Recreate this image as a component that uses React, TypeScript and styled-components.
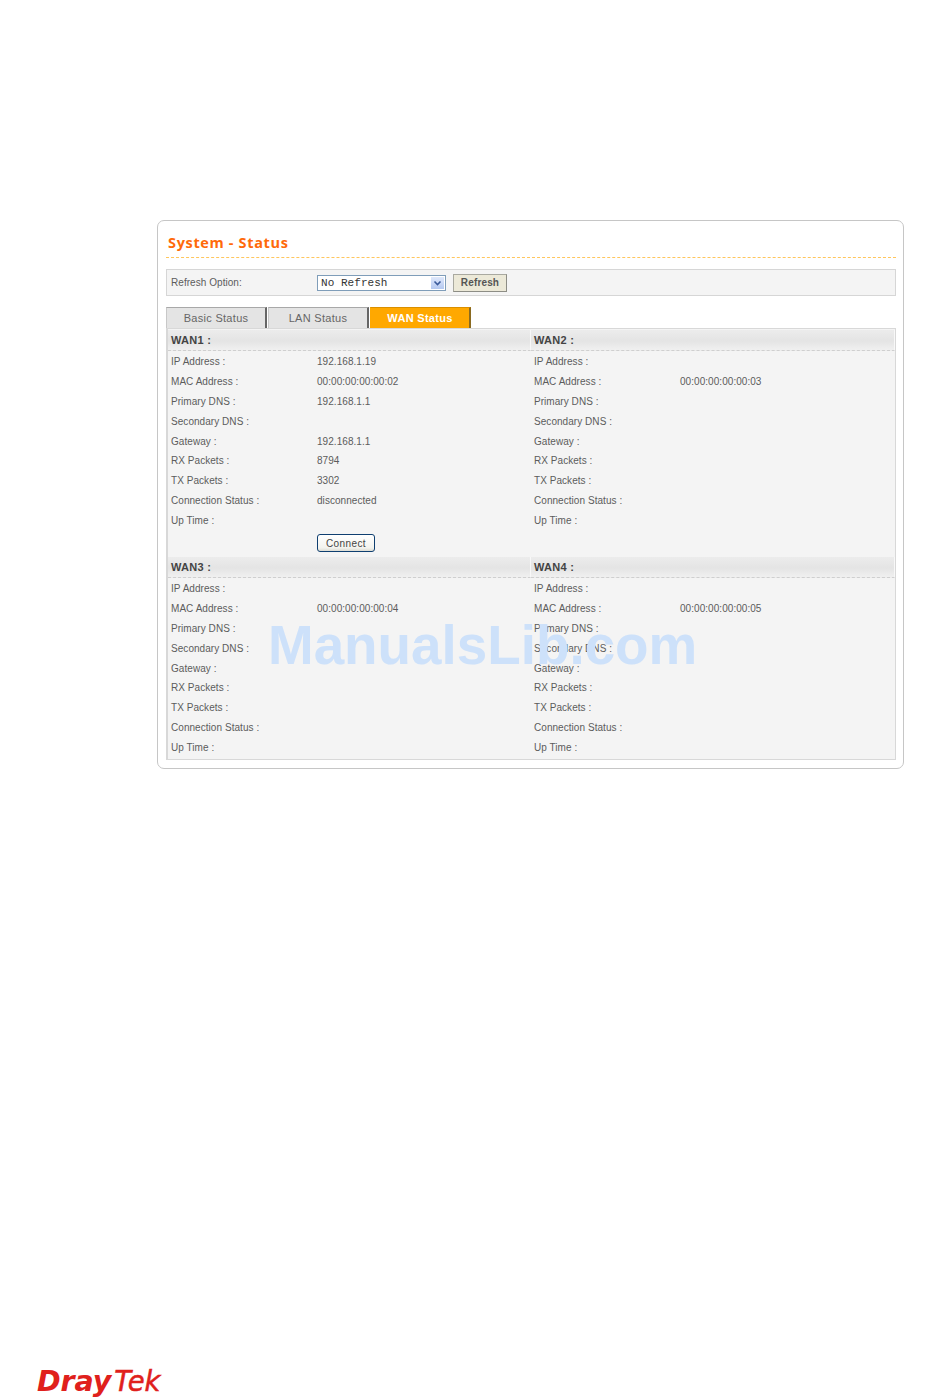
import styled, { createGlobalStyle, css } from "styled-components";

const GlobalStyle = createGlobalStyle`
  html, body {
    margin: 0;
    padding: 0;
    background: #fff;
  }
  body {
    font-family: "Liberation Sans", Arial, sans-serif;
  }
`;

type WanData = {
  name: string;
  ip?: string;
  mac: string;
  dns?: string;
  gateway?: string;
  rx?: string;
  tx?: string;
  status?: string;
  connect?: boolean;
};

const wans: WanData[] = [
  {
    name: "WAN1",
    ip: "192.168.1.19",
    mac: "00:00:00:00:00:02",
    dns: "192.168.1.1",
    gateway: "192.168.1.1",
    rx: "8794",
    tx: "3302",
    status: "disconnected",
    connect: true,
  },
  { name: "WAN2", mac: "00:00:00:00:00:03" },
  { name: "WAN3", mac: "00:00:00:00:00:04" },
  { name: "WAN4", mac: "00:00:00:00:00:05" },
];

const PageWrap = styled.div`
  position: relative;
  width: 950px;
  height: 1398px;
  overflow: hidden;
  display: flex;
  flex-direction: column;
  padding: 220px 46px 0 157px;
  box-sizing: border-box;
`;

const Card = styled.div`
  width: 747px;
  height: 549px;
  box-sizing: border-box;
  border: 1px solid #c6c6c6;
  border-radius: 7px;
  padding: 0 7px 0 8px;
  background: #fff;
`;

const Title = styled.h1`
  margin: 0;
  height: 37px;
  padding: 13px 0 0 2px;
  box-sizing: border-box;
  border-bottom: 1px dashed #ffc65c;
  font-family: "Open Sans", sans-serif;
  font-size: 14.5px;
  line-height: 18px;
  font-weight: 700;
  letter-spacing: 0.65px;
  color: #ff6a0a;
`;

const RefreshBar = styled.div`
  margin-top: 11px;
  height: 27px;
  box-sizing: border-box;
  border: 1px solid #d6d6d6;
  background: #f4f4f4;
  display: flex;
  align-items: center;
  padding-left: 4px;
`;

const textStyle = css`
  font-size: 10px;
  letter-spacing: 0.05px;
  color: #5c5c5c;
`;

const RefreshLabel = styled.span`
  ${textStyle}
  width: 146px;
  flex: none;
`;

const FakeSelect = styled.div`
  width: 129px;
  height: 16px;
  box-sizing: border-box;
  border: 1px solid #7f9db9;
  background: #fff;
  display: flex;
  align-items: center;
  justify-content: space-between;
  padding: 0 1px 0 3px;
  margin-top: 1px;
  font-family: "Liberation Mono", monospace;
  font-size: 11px;
  letter-spacing: 0.05px;
  color: #333;
`;

const SelectArrow = styled.span`
  width: 13px;
  height: 12px;
  background: linear-gradient(#dfe8fb, #b4c8f0);
  display: flex;
  align-items: center;
  justify-content: center;
`;

const RefreshButton = styled.button`
  margin-left: 7px;
  width: 54px;
  height: 18px;
  padding: 0;
  box-sizing: border-box;
  border: 1px solid #a9a9a0;
  border-right-color: #8d8d85;
  border-bottom-color: #8d8d85;
  background: #ece9d8;
  font-family: "Liberation Sans", sans-serif;
  font-size: 10px;
  font-weight: 700;
  color: #555;
  letter-spacing: 0.15px;
`;

const TabRow = styled.div`
  margin-top: 11px;
  height: 21px;
  display: flex;
  gap: 1px;
`;

const Tab = styled.div<{ $active?: boolean }>`
  width: 101px;
  box-sizing: border-box;
  display: flex;
  align-items: center;
  justify-content: center;
  font-size: 11px;
  letter-spacing: 0.3px;
  border-top: 1px solid ${(p) => (p.$active ? "#d98f00" : "#a8a8a8")};
  border-left: 1px solid ${(p) => (p.$active ? "#ffa800" : "#c8c8c8")};
  border-right: 2px solid ${(p) => (p.$active ? "#8a6a20" : "#666")};
  background: ${(p) => (p.$active ? "#ffa800" : "#e4e4e4")};
  color: ${(p) => (p.$active ? "#fff" : "#666")};
  font-weight: ${(p) => (p.$active ? 700 : 400)};
`;

const Panel = styled.div`
  box-sizing: border-box;
  height: 432px;
  border: 1px solid #d8d8d8;
  border-left-width: 2px;
  background: #f4f4f4;
  padding: 1px 0 0 0;
  display: grid;
  grid-template-columns: 363px 364px;
  grid-template-rows: 227px 1fr;
`;

const WanBlock = styled.section`
  min-width: 0;
`;

const WanHeader = styled.h2`
  margin: 0 0 0.5px;
  height: 21px;
  box-sizing: border-box;
  padding-left: 3px;
  border-bottom: 1px dashed #cfcfcf;
  border-right: 1px solid #f8f8f8;
  background: linear-gradient(#ececec, #e4e4e4 55%, #f0f0f0);
  font-size: 11px;
  line-height: 20px;
  font-weight: 700;
  letter-spacing: 0.3px;
  color: #444;
`;

const WanRow = styled.div`
  height: 19.9px;
  display: flex;
  align-items: center;
  padding-left: 3px;
  ${textStyle}
`;

const WanLabel = styled.span`
  width: 146px;
  flex: none;
`;

const ConnectRow = styled.div`
  padding: 3.5px 0 0 149px;
`;

const ConnectButton = styled.button`
  display: block;
  width: 58px;
  height: 18px;
  padding: 0;
  box-sizing: border-box;
  border: 1px solid #0f3f70;
  border-radius: 3px;
  background: linear-gradient(#fff, #f3f3ee 80%, #dcdcd4);
  font-family: "Liberation Sans", sans-serif;
  font-size: 10px;
  letter-spacing: 0.4px;
  color: #444;
`;

const Watermark = styled.div`
  position: absolute;
  left: 268px;
  top: 612px;
  font-size: 54.8px;
  line-height: 66px;
  font-weight: 700;
  color: #cde1fa;
  white-space: nowrap;
`;

const LogoFooter = styled.div`
  position: absolute;
  left: 37px;
  top: 1366px;
  height: 30px;
  display: flex;
  align-items: baseline;
  white-space: nowrap;
  color: #e0201c;
  font-family: "DejaVu Sans", sans-serif;
  font-style: italic;
  line-height: 30px;
`;

const LogoDray = styled.span`
  font-weight: 700;
  font-size: 28.5px;
  letter-spacing: -0.1px;
`;

const LogoTek = styled.span`
  font-size: 27.5px;
  margin-left: 3px;
  -webkit-text-stroke: 0.5px #e0201c;
`;

const WanSection = ({ wan }: { wan: WanData }) => {
  const rows: [string, string | undefined][] = [
    ["IP Address :", wan.ip],
    ["MAC Address :", wan.mac],
    ["Primary DNS :", wan.dns],
    ["Secondary DNS :", undefined],
    ["Gateway :", wan.gateway],
    ["RX Packets :", wan.rx],
    ["TX Packets :", wan.tx],
    ["Connection Status :", wan.status],
    ["Up Time :", undefined],
  ];
  return (
    <WanBlock>
      <WanHeader>{wan.name} :</WanHeader>
      {rows.map(([label, value]) => (
        <WanRow key={label}>
          <WanLabel>{label}</WanLabel>
          {value}
        </WanRow>
      ))}
      {wan.connect && (
        <ConnectRow>
          <ConnectButton>Connect</ConnectButton>
        </ConnectRow>
      )}
    </WanBlock>
  );
};

const App = () => {
  return (
    <PageWrap>
      <GlobalStyle />
      <Card>
        <Title>System - Status</Title>
        <RefreshBar>
          <RefreshLabel>Refresh Option:</RefreshLabel>
          <FakeSelect>
            No Refresh
            <SelectArrow>
              <svg width="9" height="7" viewBox="0 0 9 7">
                <path d="M1.5 1.5 L4.5 4.5 L7.5 1.5" fill="none" stroke="#3a5a9a" strokeWidth="1.6" />
              </svg>
            </SelectArrow>
          </FakeSelect>
          <RefreshButton>Refresh</RefreshButton>
        </RefreshBar>
        <TabRow>
          <Tab>Basic Status</Tab>
          <Tab>LAN Status</Tab>
          <Tab $active>WAN Status</Tab>
        </TabRow>
        <Panel>
          {wans.map((wan) => (
            <WanSection key={wan.name} wan={wan} />
          ))}
        </Panel>
      </Card>
      <Watermark>ManualsLib.com</Watermark>
      <LogoFooter>
        <LogoDray>Dray</LogoDray>
        <LogoTek>Tek</LogoTek>
      </LogoFooter>
    </PageWrap>
  );
};

export default App;
